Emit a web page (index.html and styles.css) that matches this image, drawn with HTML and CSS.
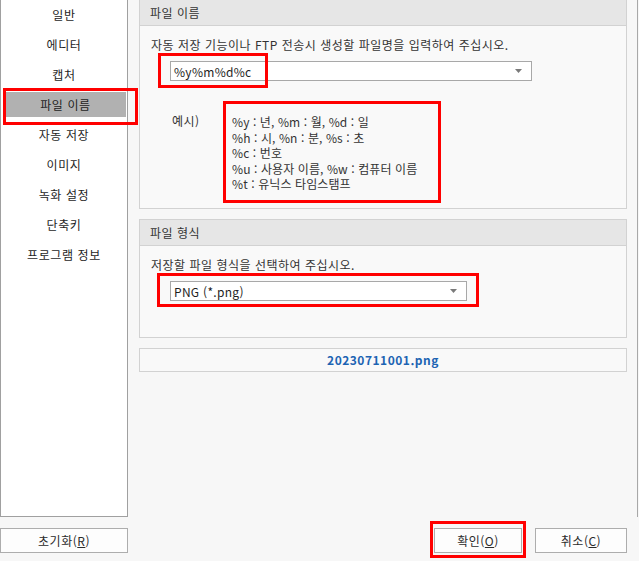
FILE: index.html
```html
<!doctype html>
<html lang="ko">
<head>
    <meta charset="UTF-8">
    <title>환경 설정</title>
    <link rel="stylesheet" href="styles.css">
</head>
<body>
<div class="window">
    <div class="main">
        <ul class="nav">
            <li>일반</li>
            <li>에디터</li>
            <li>캡처</li>
            <li class="active">파일 이름</li>
            <li>자동 저장</li>
            <li>이미지</li>
            <li>녹화 설정</li>
            <li>단축키</li>
            <li>프로그램 정보</li>
        </ul>

        <div class="content">
            <div class="group group-first">
                <div class="group-head">파일 이름</div>
                <div class="group-body">
                    <p class="desc">자동 저장 기능이나 FTP 전송시 생성할 파일명을 입력하여 주십시오.</p>
                    <div class="combo combo-name">
                        <span>%y%m%d%c</span>
                        <svg class="arrow" width="7" height="4" viewBox="0 0 7 4"><path d="M0 0H7L3.5 4Z" fill="#7a7a7a"/></svg>
                        <i class="mark"></i>
                    </div>
                    <div class="sample">
                        <span class="sample-label">예시)</span>
                        <ul class="sample-list">
                            <li>%y : 년, %m : 월, %d : 일</li>
                            <li>%h : 시, %n : 분, %s : 초</li>
                            <li>%c : 번호</li>
                            <li>%u : 사용자 이름, %w : 컴퓨터 이름</li>
                            <li>%t : 유닉스 타임스탬프</li>
                        </ul>
                    </div>
                </div>
            </div>

            <div class="group">
                <div class="group-head">파일 형식</div>
                <div class="group-body group-body-format">
                    <p class="desc">저장할 파일 형식을 선택하여 주십시오.</p>
                    <div class="combo combo-format">
                        <span>PNG (*.png)</span>
                        <svg class="arrow" width="7" height="4" viewBox="0 0 7 4"><path d="M0 0H7L3.5 4Z" fill="#7a7a7a"/></svg>
                        <i class="mark"></i>
                    </div>
                </div>
            </div>

            <div class="preview">20230711001.png</div>
        </div>

        <div class="rail"></div>
    </div>

    <div class="footer">
        <button class="btn btn-reset">초기화(<u>R</u>)</button>
        <button class="btn btn-ok">확인(<u>O</u>)<i class="mark"></i></button>
        <button class="btn btn-cancel">취소(<u>C</u>)</button>
    </div>
</div>
</body>
</html>
```

FILE: styles.css
```css
* {
    margin: 0;
    padding: 0;
    box-sizing: border-box;
}

li {
    list-style: none;
}

html, body {
    width: 100%;
    height: 100%;
}

body {
    background-color: #f7f7f7;
    font-family: "Noto Sans CJK KR", sans-serif;
    font-size: 12px;
    color: #2b2b2b;
}

.window {
    width: 639px;
    height: 561px;
    display: flex;
    flex-direction: column;
}

.main {
    display: flex;
    height: 517px;
}

/* left menu */
.nav {
    width: 128px;
    height: 517px;
    background-color: #fff;
    border-left: 1px solid #a0a0a0;
    border-right: 1px solid #a0a0a0;
    border-bottom: 1px solid #a0a0a0;
}

.nav > li {
    position: relative;
    height: 30px;
    line-height: 30px;
    text-align: center;
    letter-spacing: 0.6px;
    color: #1e1e1e;
}

.nav > li.active {
    margin: 0 1px 0 4px;
    background: #b1b1b1 content-box;
    padding: 2px 0 3px;
    line-height: 25px;
}

.nav > li.active::after {
    content: "";
    position: absolute;
    left: -2px;
    top: -2px;
    width: 129px;
    height: 31px;
    border: 3px solid #f00;
}

/* right panel */
.content {
    width: 488px;
    margin-left: 11px;
}

.group {
    margin-top: 10px;
    background-color: #f9f9f9;
    border: 1px solid #d2d2d2;
}

.group-first {
    margin-top: 0;
    border-top: none;
}

.group-head {
    height: 26px;
    line-height: 25px;
    padding-left: 10px;
    letter-spacing: 0.5px;
    background-color: #e6e6e6;
    border-bottom: 1px solid #d2d2d2;
    color: #333;
}

.group-body {
    padding: 11px 0 5px 11px;
}

.group-body-format {
    padding-bottom: 36px;
}

.desc {
    line-height: 16px;
    letter-spacing: 0.5px;
    color: #333;
}

.combo {
    position: relative;
    display: flex;
    align-items: center;
    justify-content: space-between;
    height: 20px;
    margin: 8px 0 0 19px;
    padding: 0 9px 0 3px;
    background-color: #fff;
    border: 1px solid #a8a8a8;
    letter-spacing: 0.3px;
    color: #1e1e1e;
}

.combo-name {
    width: 362px;
}

.combo-format {
    width: 297px;
}

.mark {
    position: absolute;
    border: 3px solid #f00;
}

.combo-name > .mark {
    left: -13px;
    top: -9px;
    width: 110px;
    height: 35px;
}

.combo-format > .mark {
    left: -14px;
    top: -9px;
    width: 322px;
    height: 34px;
}

.sample {
    display: flex;
    align-items: flex-start;
    margin-top: 20px;
}

.sample-label {
    width: 72px;
    padding: 12px 0 0 21px;
    line-height: 16px;
    letter-spacing: 0.5px;
    color: #333;
}

.sample-list {
    width: 218px;
    height: 102px;
    padding: 10px 0 0 6px;
    border: 3px solid #f00;
}

.sample-list > li {
    line-height: 15.5px;
    letter-spacing: 0.1px;
    color: #333;
}

.preview {
    height: 24px;
    margin-top: 10px;
    line-height: 22px;
    text-align: center;
    font-weight: bold;
    letter-spacing: 0.5px;
    color: #1d64b3;
    background-color: #f9f9f9;
    border: 1px solid #d2d2d2;
}

.rail {
    width: 1px;
    height: 517px;
    margin-left: 10px;
    background-color: #a8a8a8;
}

/* bottom buttons */
.footer {
    display: flex;
    margin-top: 11px;
}

.btn {
    position: relative;
    height: 25px;
    font-family: inherit;
    font-size: 12px;
    letter-spacing: 0.5px;
    color: #2b2b2b;
    background-color: #fdfdfd;
    border: 1px solid #adadad;
}

.btn u {
    text-decoration: underline;
}

.btn-reset {
    width: 128px;
}

.btn-ok {
    width: 88px;
    margin-left: 306px;
}

.btn > .mark {
    left: -5px;
    top: -8px;
    width: 96px;
    height: 37px;
}

.btn-cancel {
    width: 92px;
    margin-left: 13px;
}
```
